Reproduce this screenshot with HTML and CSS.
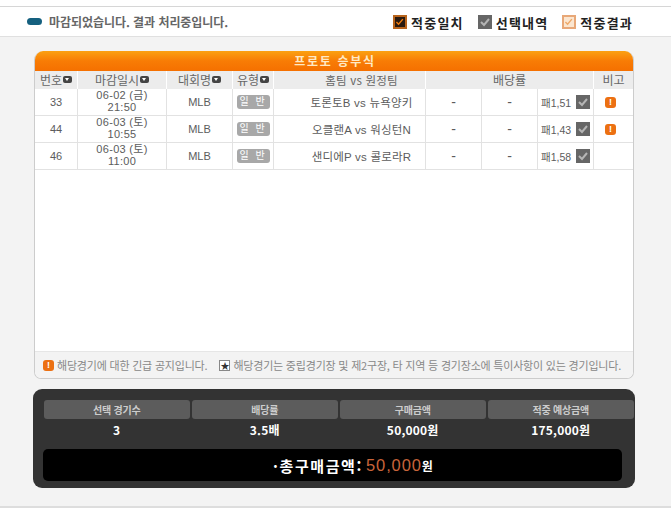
FILE: index.html
```html
<!DOCTYPE html>
<html lang="ko">
<head>
<meta charset="utf-8">
<title>프로토 승부식</title>
<link rel="stylesheet" href="styles.css">
</head>
<body>
<div class="page">
  <div class="topbar">
    <div class="status"><span class="pill"></span><span>마감되었습니다. 결과 처리중입니다.</span></div>
    <div class="legend">
      <div class="legend-item"><span class="box box-hit"><svg viewBox="0 0 14 14"><path d="M2 7l3 3 6-7" fill="none" stroke="#f07d10" stroke-width="2"/></svg></span>적중일치</div>
      <div class="legend-item"><span class="box box-sel"><svg viewBox="0 0 14 14"><path d="M3 7l3 3 5-6" fill="none" stroke="#b5b5b5" stroke-width="2"/></svg></span>선택내역</div>
      <div class="legend-item"><span class="box box-res"><svg viewBox="0 0 14 14"><path d="M2 7l3 3 6-7" fill="none" stroke="#eea868" stroke-width="2"/></svg></span>적중결과</div>
    </div>
  </div>
  <div class="content">
    <section class="panel">
      <h1 class="panel-title">프로토 승부식</h1>
      <div class="row head">
        <div>번호<i class="sort"></i></div>
        <div>마감일시<i class="sort"></i></div>
        <div>대회명<i class="sort"></i></div>
        <div>유형<i class="sort"></i></div>
        <div class="teams">홈팀 vs 원정팀</div>
        <div class="span3">배당률</div>
        <div>비고</div>
      </div>
      <div class="row">
        <div>33</div>
        <div class="date">06-02 (금)<br>21:50</div>
        <div>MLB</div>
        <div><span class="tag">일 반</span></div>
        <div class="teams">토론토B vs 뉴욕양키</div>
        <div class="dash">-</div>
        <div class="dash">-</div>
        <div class="odds">패1,51<span class="check"><svg viewBox="0 0 14 14"><path d="M3 7l3 3 5-6" fill="none" stroke="#b5b5b5" stroke-width="2"/></svg></span></div>
        <div class="memo"><span class="alert">!</span></div>
      </div>
      <div class="row">
        <div>44</div>
        <div class="date">06-03 (토)<br>10:55</div>
        <div>MLB</div>
        <div><span class="tag">일 반</span></div>
        <div class="teams">오클랜A vs 워싱턴N</div>
        <div class="dash">-</div>
        <div class="dash">-</div>
        <div class="odds">패1,43<span class="check"><svg viewBox="0 0 14 14"><path d="M3 7l3 3 5-6" fill="none" stroke="#b5b5b5" stroke-width="2"/></svg></span></div>
        <div class="memo"><span class="alert">!</span></div>
      </div>
      <div class="row">
        <div>46</div>
        <div class="date">06-03 (토)<br>11:00</div>
        <div>MLB</div>
        <div><span class="tag">일 반</span></div>
        <div class="teams">샌디에P vs 콜로라R</div>
        <div class="dash">-</div>
        <div class="dash">-</div>
        <div class="odds">패1,58<span class="check"><svg viewBox="0 0 14 14"><path d="M3 7l3 3 5-6" fill="none" stroke="#b5b5b5" stroke-width="2"/></svg></span></div>
        <div class="memo"></div>
      </div>
      <div class="spacer"></div>
      <div class="notes">
        <span class="note"><span class="alert">!</span>해당경기에 대한 긴급 공지입니다.</span>
        <span class="note"><span class="star">★</span>해당경기는 중립경기장 및 제2구장, 타 지역 등 경기장소에 특이사항이 있는 경기입니다.</span>
      </div>
    </section>
    <section class="summary">
      <div class="sum-grid">
        <div class="sum-label">선택 경기수</div>
        <div class="sum-label">배당률</div>
        <div class="sum-label">구매금액</div>
        <div class="sum-label">적중 예상금액</div>
        <div class="sum-value">3</div>
        <div class="sum-value">3.5배</div>
        <div class="sum-value">50,000원</div>
        <div class="sum-value">175,000원</div>
      </div>
      <div class="total">·총구매금액:<span class="amount">50,000</span><span class="won">원</span></div>
    </section>
  </div>
</div>
</body>
</html>
```
FILE: styles.css
```css
* { box-sizing: border-box; }
html, body { margin: 0; padding: 0; background: #fff; }
body { font-family: "Noto Sans CJK KR", "Liberation Sans", sans-serif; color: #555; }
.page { width: 671px; height: 523px; padding-top: 6px; overflow: hidden; }
.topbar {
  height: 31px;
  border-top: 1px solid #d6d6d6;
  border-bottom: 1px solid #e0e0e0;
  display: flex;
  align-items: center;
  justify-content: space-between;
  padding: 0 38px 0 27px;
}
.status { display: flex; align-items: center; gap: 7px; padding-bottom: 1px; font-size: 12px; font-weight: 700; color: #666; letter-spacing: -0.05px; }
.pill { width: 15px; height: 7px; border-radius: 4px; background: #15607f; }
.legend { display: flex; gap: 14px; padding-top: 1px; }
.legend-item { display: flex; align-items: center; gap: 4px; font-size: 13px; font-weight: 700; color: #222; letter-spacing: 1.2px; }
.box { width: 14px; height: 14px; display: block; }
.box svg, .check svg { display: block; width: 100%; height: 100%; }
.box-hit { background: #2a1a10; border: 2px solid #b8641c; }
.box-sel { background: #666; }
.box-res { background: #fbe6d0; border: 2px solid #e8a878; }
.content { height: 471px; background: #f3f3f3; border-bottom: 2px solid #ddd; padding: 14px 36px 0 33px; }
.panel {
  margin-left: 1px;
  width: 600px;
  height: 328px;
  background: #fff;
  border: 1px solid #ccc;
  border-top: 0;
  border-radius: 9px 9px 7px 7px;
  display: flex;
  flex-direction: column;
  overflow: hidden;
}
.panel-title {
  margin: 0 -1px;
  padding-left: 2px;
  height: 20px;
  background: linear-gradient(#fba112, #f87c05 50%, #f57000);
  color: #ffe9c4;
  font-size: 12px;
  font-weight: 700;
  line-height: 20px;
  text-align: center;
  letter-spacing: 1.7px;
}
.row {
  display: grid;
  grid-template-columns: 43px 89px 66px 41px 152px 56px 56px 56px 39px;
  height: 27px;
  border-bottom: 1px solid #e2e2e2;
  font-size: 11px;
  color: #5c5c5c;
  font-family: "Liberation Sans", "Noto Sans CJK KR", sans-serif;
}
.row > div {
  display: flex;
  align-items: center;
  justify-content: center;
  border-right: 1px solid #e2e2e2;
  text-align: center;
}
.row > div:last-child { border-right: 0; }
.head {
  height: 18px; background: #ececec; border-bottom: 0; font-size: 12px; color: #666;
  font-family: "Noto Sans CJK KR", "Liberation Sans", sans-serif;
}
.head > div { border-right-color: #fff; padding-bottom: 1px; }
.head .span3 { grid-column: span 3; }
.sort { width: 9px; height: 7px; margin-left: 1px; border-radius: 2px; background: #444; position: relative; display: block; }
.sort::after {
  content: ""; position: absolute; left: 2px; top: 2px;
  border: 2.5px solid transparent; border-top: 3px solid #fff; border-bottom: 0;
}
.row > .date { display: block; line-height: 12px; font-size: 11px; letter-spacing: 0.3px; }
.tag {
  width: 33px; height: 14px; border-radius: 3px; background: #a8a8a8; color: #fff;
  font-size: 10px; line-height: 14px; letter-spacing: 2px; display: block;
}
.row > .teams { padding-left: 24px; font-size: 11.5px; letter-spacing: 0.2px; }
.row > .dash { font-size: 14px; }
.row > .odds { justify-content: flex-start; padding-left: 3px; gap: 5px; font-size: 10.5px; }
.check { width: 14px; height: 14px; background: #666; display: block; }
.row > .memo { padding-right: 6px; }
.alert {
  width: 11px; height: 11px; border-radius: 3px; background: #ec7012; color: #fff;
  font-size: 9px; font-weight: 700; line-height: 11px; text-align: center; display: block; font-family: "Liberation Sans", sans-serif;
}
.spacer { flex: 1; }
.notes {
  height: 27px; background: #f3f3f3; border-top: 1px solid #e6e6e6;
  display: flex; align-items: center; padding: 0 0 0 8px; gap: 12px;
  font-size: 11px; color: #888; letter-spacing: -0.2px; white-space: nowrap;
}
.note { display: flex; align-items: center; gap: 3px; }
.star { width: 11px; height: 11px; border: 1px solid #888; background: #fff; color: #333; font-size: 9px; line-height: 9px; text-align: center; display: block; }
.summary {
  margin-top: 10px; width: 602px; height: 99px; background: #333;
  border-radius: 9px; padding: 11px 2px 0 11px; display: flex; flex-direction: column;
}
.sum-grid { display: grid; grid-template-columns: repeat(4, 145.5px); column-gap: 2.5px; grid-template-rows: 19px 30px; }
.sum-label {
  background: #5c5c5c; border-radius: 3px; color: #ccc; font-size: 10px; font-weight: 700;
  line-height: 19px; text-align: center; letter-spacing: -0.2px;
}
.sum-value { color: #fff; font-size: 12px; font-weight: 700; line-height: 22px; text-align: center; letter-spacing: 0.2px; }
.total {
  margin-left: -1px; width: 579px; height: 32px; background: #000; border-radius: 5px; color: #fff;
  font-size: 15px; font-weight: 700; display: flex; align-items: center; padding-left: 230px;
  letter-spacing: 1.6px;
}
.amount { color: #c8643a; font-family: "Liberation Sans", sans-serif; font-size: 16.5px; font-weight: 400; letter-spacing: 0.9px; margin-left: 3px; }
.won { font-size: 12px; margin-left: 0; letter-spacing: 0; }
```
